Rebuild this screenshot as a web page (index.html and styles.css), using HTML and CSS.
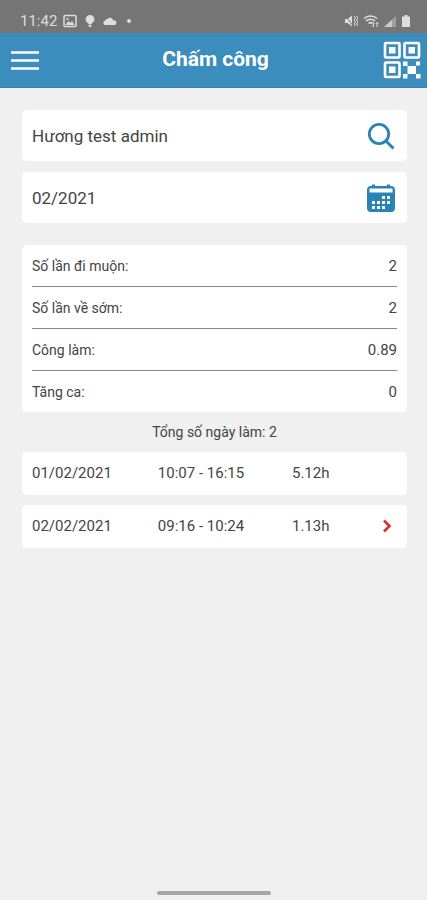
FILE: index.html
```html
<!DOCTYPE html>
<html lang="vi">
<head>
  <meta charset="UTF-8">
  <meta name="viewport" content="width=device-width, initial-scale=1">
  <title>Chấm công</title>
  <link rel="stylesheet" href="styles.css">
</head>
<body>
  <div class="status-bar">
    <div class="status-left">
      <span>11:42</span>
      <svg width="14" height="14" viewBox="0 0 14 14">
        <rect x="1" y="1.500" width="12" height="11" rx="1" fill="none" stroke="currentColor" stroke-width="1.500"/>
        <path d="M2.500 11l3-4 2 2 1.500-2 2.500 4z" fill="currentColor"/>
        <circle cx="4.500" cy="5" r="1" fill="currentColor"/>
      </svg>
      <svg width="14" height="14" viewBox="0 0 14 14">
        <path d="M7 1a4.300 4.300 0 0 0-2.500 7.800L6 10.500h2l1.500-1.700A4.300 4.300 0 0 0 7 1zM5.700 11h2.600v2H5.700z" fill="currentColor"/>
      </svg>
      <svg width="14" height="14" viewBox="0 0 14 14">
        <path d="M2.200 11a2.200 2.200 0 0 1-.2-4.300 1.800 1.800 0 0 1 2-1.500 3.500 3.500 0 0 1 6.300 1.300A2.300 2.300 0 0 1 11.800 11z" fill="currentColor"/>
      </svg>
      <span class="dot"></span>
    </div>
    <div class="status-right">
      <svg width="14" height="14" viewBox="0 0 14 14">
        <path d="M1 5h2.500L8 1.500v11L3.500 9H1z" fill="currentColor"/>
        <path d="M1 1l8 11" stroke="#757575" stroke-width="1"/>
        <path d="M10 2l1.500 2L10 6l1.500 2L10 10l1.500 2M12.500 2L14 4l-1.500 2L14 8l-1.500 2 1.500 2" fill="none" stroke="currentColor"/>
      </svg>
      <svg width="16" height="14" viewBox="0 0 16 14">
        <path d="M1 4.500a9.500 9.500 0 0 1 13 0M3 7a6.500 6.500 0 0 1 9 0M5.500 9.500a3 3 0 0 1 4 0" fill="none" stroke="currentColor" stroke-width="1.500"/>
        <path d="M10.500 8v5M9 11.500l1.500 1.500M14 13V8.500M12.500 10L14 8.500l1.500 1.500" fill="none" stroke="currentColor"/>
      </svg>
      <svg width="12" height="14" viewBox="0 0 12 14">
        <path d="M0 13L12 2v11z" fill="currentColor" opacity=".4"/>
        <path d="M0 13l8-7.300V13z" fill="currentColor" opacity=".7"/>
      </svg>
      <svg width="10" height="14" viewBox="0 0 10 14">
        <path d="M3.500 1h3v1.500h2.500V13H1V2.500h2.500z" fill="currentColor"/>
      </svg>
    </div>
  </div>

  <header class="app-bar">
    <button class="icon-btn" type="button" aria-label="Menu">
      <svg width="30" height="30" viewBox="0 0 30 30">
        <path d="M1 7.500h28M1 15.500h28M1 23.500h28" stroke="currentColor" stroke-width="2.500"/>
      </svg>
    </button>
    <h1>Chấm công</h1>
    <button class="icon-btn qr-btn" type="button" aria-label="QR">
      <svg width="38" height="38" viewBox="0 0 38 38">
        <g fill="none" stroke="currentColor" stroke-width="2.600">
          <rect x="2" y="2" width="14.500" height="14.500" rx="1"/>
          <rect x="21.500" y="2" width="14.500" height="14.500" rx="1"/>
          <rect x="2" y="21.500" width="14.500" height="14.500" rx="1"/>
        </g>
        <path d="M6 6h6.500v6.500H6zM25.500 6h6.500v6.500h-6.500zM6 25.500h6.500v6.500H6zM20 20.500h4.500v4.500H20zM33 20.500h4v4h-4zM24.500 25h8.500v8h-8.500zM20 33h4.500v4.500H20zM33 33h4.500v4.500H33z" fill="currentColor"/>
      </svg>
    </button>
  </header>

  <main>
    <form class="filters">
      <div class="field">
        <input type="text" value="Hương test admin" aria-label="Nhân viên">
        <button class="icon-btn" type="button" aria-label="Tìm kiếm">
          <svg width="28" height="28" viewBox="0 0 28 28">
            <circle cx="12" cy="12" r="9.700" fill="none" stroke="currentColor" stroke-width="2.800"/>
            <path d="M18.500 18.500l8 8" stroke="currentColor" stroke-width="3"/>
          </svg>
        </button>
      </div>
      <div class="field">
        <input type="text" value="02/2021" aria-label="Tháng">
        <button class="icon-btn" type="button" aria-label="Chọn tháng">
          <svg width="28" height="28" viewBox="0 0 28 28">
            <path d="M4 2h1V.5h3V2h12V.5h3V2h1a4 4 0 0 1 4 4v18a4 4 0 0 1-4 4H4a4 4 0 0 1-4-4V6a4 4 0 0 1 4-4z" fill="currentColor"/>
            <path d="M2.500 4.500h23v4h-23z" fill="#fff"/>
            <path d="M15 12h3v3h-3zM20 12h3v3h-3zM5 17h3v3H5zM10 17h3v3h-3zM15 17h3v3h-3zM20 17h3v3h-3zM5 22h3v3H5zM10 22h3v3h-3zM15 22h3v3h-3z" fill="#fff"/>
          </svg>
        </button>
      </div>
    </form>

    <dl class="summary">
      <div><dt>Số lần đi muộn:</dt><dd>2</dd></div>
      <div><dt>Số lần về sớm:</dt><dd>2</dd></div>
      <div><dt>Công làm:</dt><dd>0.89</dd></div>
      <div><dt>Tăng ca:</dt><dd>0</dd></div>
    </dl>

    <p class="total">Tổng số ngày làm: 2</p>

    <table class="days">
      <tbody>
        <tr>
          <td class="date">01/02/2021</td>
          <td class="time">10:07 - 16:15</td>
          <td class="hours">5.12h</td>
          <td class="more"></td>
        </tr>
        <tr>
          <td class="date">02/02/2021</td>
          <td class="time">09:16 - 10:24</td>
          <td class="hours">1.13h</td>
          <td class="more">
            <button class="icon-btn" type="button" aria-label="Chi tiết">
              <svg width="10" height="14" viewBox="0 0 10 14">
                <path d="M2 1.500L7.500 7 2 12.500" fill="none" stroke="currentColor" stroke-width="2.500"/>
              </svg>
            </button>
          </td>
        </tr>
      </tbody>
    </table>
  </main>

  <div class="home-bar"></div>
</body>
</html>
```
FILE: styles.css
```css
* {
  box-sizing: border-box;
}
body {
  display: flex;
  flex-direction: column;
  margin: 0;
  min-height: 100vh;
  background: #f0f0f0;
  color: #444;
  font-family: Roboto, 'Liberation Sans', sans-serif;
  font-size: 15px;
  line-height: 20px;
}
svg {
  display: block;
}
.icon-btn {
  padding: 0;
  border: none;
  background: none;
  color: inherit;
  cursor: pointer;
}

/* Phone status bar */
.status-bar {
  display: flex;
  justify-content: space-between;
  align-items: center;
  height: 33px;
  padding: 8px 16px 0 20px;
  background: #757575;
  color: #ddd;
  font-size: 15px;
}
.status-left {
  display: flex;
  align-items: center;
  gap: 6px;
}
.status-right {
  display: flex;
  align-items: center;
  gap: 5px;
}
.dot {
  width: 4px;
  height: 4px;
  margin-left: 4px;
  border-radius: 50%;
  background: #ddd;
}

.app-bar {
  display: grid;
  grid-template-columns: 1fr auto 1fr;
  align-items: center;
  height: 55px;
  padding: 0 6px 0 10px;
  background: #3a8dbc;
  border-bottom: 1px solid #3580ac;
  color: #fff;
}
.app-bar h1 {
  margin: 0;
  padding-bottom: 2px;
  font-size: 21px;
  font-weight: 700;
  line-height: 24px;
}
.app-bar .icon-btn {
  justify-self: start;
}
.app-bar .qr-btn {
  justify-self: end;
}

main {
  flex: 1;
  padding: 22px 20px 0 22px;
}
.filters {
  display: flex;
  flex-direction: column;
  gap: 11px;
}
.field {
  display: flex;
  align-items: center;
  height: 51px;
  padding: 0 12px 0 10px;
  background: #fff;
  border-radius: 5px;
  color: #2b83b5;
}
.field input {
  flex: 1;
  min-width: 0;
  padding: 0;
  border: none;
  outline: none;
  background: none;
  color: #444;
  font: inherit;
  font-size: 17px;
}

.summary {
  margin: 22px 0 0;
  padding: 0 10px;
  background: #fff;
  border-radius: 5px;
}
.summary div {
  display: flex;
  justify-content: space-between;
  align-items: center;
  height: 42px;
  border-bottom: 1px solid #888;
}
.summary div:last-child {
  height: 41px;
  border-bottom: none;
}
.summary dt {
  font-size: 14px;
}
.summary dd {
  margin: 0;
}

.total {
  margin: 10px 0;
  text-align: center;
  font-size: 14px;
}

.days {
  width: 100%;
  margin-top: -10px;
  border-spacing: 0 10px;
  table-layout: fixed;
}
.days td {
  height: 43px;
  padding: 0 0 2px;
  background: #fff;
  text-align: center;
}
.days .date {
  width: 28%;
  padding-left: 10px;
  border-radius: 5px 0 0 5px;
  text-align: left;
}
.days .time {
  width: 37%;
}
.days .hours {
  width: 20%;
}
.days .more {
  padding-right: 15px;
  border-radius: 0 5px 5px 0;
  color: #e02b2b;
}
.more .icon-btn {
  display: block;
  margin-left: auto;
}

.home-bar {
  width: 114px;
  height: 4px;
  margin: 0 auto 5px;
  border-radius: 2px;
  background: #a5a5a5;
}
```
